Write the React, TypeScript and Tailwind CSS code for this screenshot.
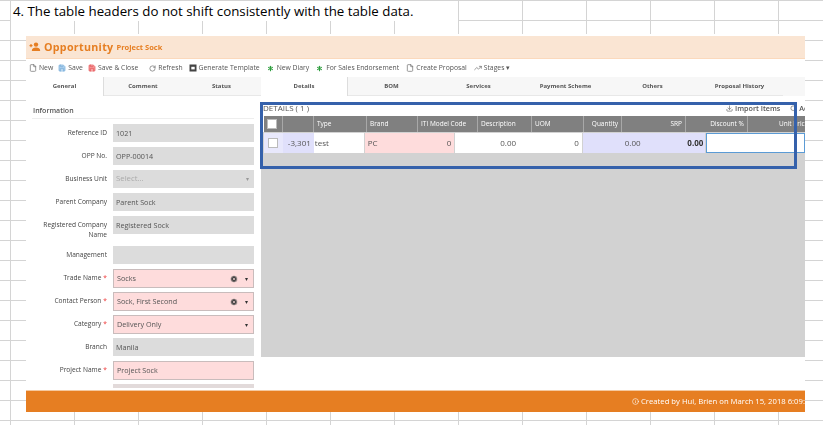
import { File, Save, RotateCw, Asterisk, TrendingUp, CircleX, Info, Search, Download } from "lucide-react";

const font = { fontFamily: '"Open Sans", "Noto Sans", sans-serif' };

type Field = { label: string; value?: string; tone: "gray" | "pink"; req?: boolean; clear?: boolean; caret?: boolean; placeholder?: boolean; h: string; mb: string };

const fields: Field[] = [
  { label: "Reference ID", value: "1021", tone: "gray", h: "h-[18px]", mb: "mb-[5px]" },
  { label: "OPP No.", value: "OPP-00014", tone: "gray", h: "h-[18px]", mb: "mb-[5px]" },
  { label: "Business Unit", value: "Select...", tone: "gray", caret: true, placeholder: true, h: "h-[18px]", mb: "mb-[5px]" },
  { label: "Parent Company", value: "Parent Sock", tone: "gray", h: "h-[18px]", mb: "mb-[5px]" },
  { label: "Registered Company Name", value: "Registered Sock", tone: "gray", h: "h-[18px]", mb: "mb-[6px]" },
  { label: "Management", value: "", tone: "gray", h: "h-[18px]", mb: "mb-[5px]" },
  { label: "Trade Name", value: "Socks", tone: "pink", req: true, clear: true, caret: true, h: "h-[19px]", mb: "mb-[4px]" },
  { label: "Contact Person", value: "Sock, First Second", tone: "pink", req: true, clear: true, caret: true, h: "h-[19px]", mb: "mb-[4px]" },
  { label: "Category", value: "Delivery Only", tone: "pink", req: true, caret: true, h: "h-[19px]", mb: "mb-[4px]" },
  { label: "Branch", value: "Manila", tone: "gray", h: "h-[18px]", mb: "mb-[5px]" },
  { label: "Project Name", value: "Project Sock", tone: "pink", req: true, h: "h-[19px]", mb: "mb-[4px]" },
];

const tabs = [
  { t: "General", w: "w-[78px]", on: true },
  { t: "Comment", w: "w-[78px]" },
  { t: "Status", w: "w-[79px]" },
  { t: "Details", w: "w-[87px]", on: true },
  { t: "BOM", w: "w-[87px]" },
  { t: "Services", w: "w-[87px]" },
  { t: "Payment Scheme", w: "w-[87px]" },
  { t: "Others", w: "w-[87px]" },
  { t: "Proposal History", w: "w-[87px]" },
];

const heads = [
  { t: "", w: "w-[19px]", box: true },
  { t: "", w: "w-[31px]" },
  { t: "Type", w: "w-[53px]" },
  { t: "Brand", w: "w-[51px]" },
  { t: "ITI Model Code", w: "w-[60px]" },
  { t: "Description", w: "w-[54px]" },
  { t: "UOM", w: "w-[52px]" },
  { t: "Quantity", w: "w-[38px]", right: true },
  { t: "SRP", w: "w-[64px]", right: true },
  { t: "Discount %", w: "w-[62px]", right: true },
];

function Tool({ icon, label, cls }: { icon: React.ReactNode; label: string; cls?: string }) {
  return (
    <span className={`flex items-center gap-[2px] ${cls ?? ""}`}>
      {icon}
      <span>{label}</span>
    </span>
  );
}

function FormRow({ f }: { f: Field }) {
  const bg = f.tone === "pink" ? "bg-[#fedcdc] border border-[#c9bcbc]" : "bg-[#dcdcdc]";
  return (
    <div className={`flex ${f.mb}`}>
      <div className="w-[75px] shrink-0 text-right text-[6.6px] leading-[10px] text-[#444] pt-[4px]">
        {f.label}
        {f.req && <span className="text-[#e33] ml-[2px]">*</span>}
      </div>
      <div className={`ml-[6px] w-[141px] ${f.h} ${bg} flex items-center pl-[3px] pr-[5px] ${f.placeholder ? "text-[#aaa] text-[7.800px]" : "text-[#555] text-[7.200px]"}`}>
        <span className="flex-1">{f.value}</span>
        {f.clear && <CircleX size={8} className="text-[#fedcdc] fill-[#444] mr-[7px]" />}
        {f.caret && <span className={`text-[6px] leading-none ${f.placeholder ? "text-[#999]" : "text-[#333]"}`}>▾</span>}
      </div>
    </div>
  );
}

export default function App() {
  return (
    <div
      style={font}
      className="relative w-[823px] h-[425px] overflow-hidden bg-white bg-[linear-gradient(to_right,#d4d4d4_1px,transparent_1px),linear-gradient(to_bottom,#d4d4d4_1px,transparent_1px)] bg-[size:64px_20px] bg-[position:10px_0px]"
    >
      {/* sheet row 1 text */}
      <div className="ml-[11px] w-[447px] h-[20px] mt-px bg-white pl-[2px] text-[13.3px] leading-[20px] text-black whitespace-nowrap">
        4. The table headers do not shift consistently with the table data.
      </div>

      {/* application panel */}
      <div className="relative ml-[26px] mt-[13px] w-[779px] h-[378px] bg-white overflow-hidden blur-[0.4px]">
        {/* title */}
        <div className="mt-[2px] h-[23px] bg-[#fae5d3] border-b border-[#fbd9bc] flex items-center pl-[3px] text-[#e67e22]">
          <svg width="12" height="10" viewBox="0 0 12 10" className="mr-[3px]" fill="#e67e22">
            <circle cx="7" cy="2.6" r="2.2" />
            <path d="M2.8 9c0-2.400 1.900-3.400 4.200-3.400S11.200 6.600 11.200 9z" />
            <rect x="0.500" y="3" width="3" height="1.200" />
            <rect x="1.400" y="2" width="1.200" height="3.200" />
          </svg>
          <span className="text-[10.7px] font-bold tracking-[0.3px]">Opportunity</span>
          <span className="text-[7.500px] font-bold ml-[3px] mt-[2px]">Project Sock</span>
        </div>

        {/* toolbar */}
        <div className="h-[18px] flex items-center gap-[5px] pl-[3px] text-[6.800px] text-[#555] whitespace-nowrap">
          <Tool icon={<File size={8} className="text-[#666]" />} label="New" />
          <Tool icon={<Save size={8} className="text-[#6aa6d8] fill-[#b5d4ee]" />} label="Save" />
          <Tool icon={<Save size={8} className="text-[#e5484d] fill-[#f5a0a0]" />} label="Save & Close" />
          <Tool icon={<RotateCw size={7} className="text-[#555] ml-[6px]" />} label="Refresh" />
          <Tool
            icon={
              <svg width="8" height="8" viewBox="0 0 8 8" className="ml-px">
                <rect x="0.500" y="0.500" width="7" height="7" fill="#444" />
                <rect x="2.300" y="2.800" width="3.400" height="2.600" fill="#fff" />
              </svg>
            }
            label="Generate Template"
          />
          <Tool icon={<Asterisk size={9} strokeWidth={3} className="text-[#2e9e3f] ml-px" />} label="New Diary" />
          <Tool icon={<Asterisk size={9} strokeWidth={3} className="text-[#2e9e3f] ml-px" />} label="For Sales Endorsement" />
          <Tool icon={<File size={8} className="text-[#666] ml-[2px]" />} label="Create Proposal" />
          <Tool icon={<TrendingUp size={8} className="text-[#666] ml-[2px]" />} label="Stages ▾" />
        </div>

        {/* tabs */}
        <div className="h-[19px] flex bg-[#f7f7f7] text-[6px] font-bold text-[#555]">
          {tabs.map((t) => (
            <div
              key={t.t}
              className={`${t.w} shrink-0 flex items-center justify-center ${t.on ? "bg-white border-r border-[#ddd]" : "border-b border-[#e8e8e8]"}`}
            >
              {t.t}
            </div>
          ))}
        </div>

        <div className="flex">
          {/* left form */}
          <div className="w-[235px] shrink-0 h-[293px] overflow-hidden pl-[6px]">
            <div className="mt-[10px] h-[13px] w-[222px] border-b border-[#eee] text-[7px] font-semibold text-[#555] pl-px">
              Information
            </div>
            <div className="pt-[5px]">
              {fields.map((f) => (
                <FormRow key={f.label} f={f} />
              ))}
              <div className="ml-[81px] w-[141px] h-[4px] bg-[#e2dada]" />
            </div>
          </div>

          {/* details */}
          <div className="w-[544px] shrink-0">
            <div className="h-[11px] mt-[9px] bg-white flex items-start pl-[2px] text-[8px] leading-[5px] text-[#555] overflow-hidden whitespace-nowrap">
              <span>DETAILS ( 1 )</span>
              <span className="flex items-center gap-[10px] font-semibold text-[7.200px] ml-auto shrink-0 mr-[-8px]">
                <span className="flex items-center gap-[2px]"><Download size={7} />Import Items</span>
                <span className="flex items-center gap-[2px]"><Search size={7} />Add</span>
              </span>
            </div>
            <div className="h-[241px] bg-[#d2d2d2] overflow-hidden">
              <div className="flex h-[16px] pl-[3px] bg-[#fff]">
                <div className="flex w-full bg-[#808080] text-[6.500px] text-white">
                  {heads.map((h, i) => (
                    <div
                      key={i}
                      className={`${h.w} shrink-0 flex items-center border-r border-[#a8a8a8] whitespace-nowrap overflow-hidden ${h.right ? "justify-end pr-[3px]" : "pl-[3px]"}`}
                    >
                      {h.box && <span className="w-[10px] h-[10px] bg-white border border-[#bbb]" />}
                      {h.t}
                    </div>
                  ))}
                  <div className="flex-1 flex items-center pl-[31px] whitespace-nowrap overflow-hidden">Unit Price</div>
                </div>
              </div>
              <div className="flex h-[20px] mt-px pl-[3px] text-[8px] text-[#555]">
                <div className="w-[19px] bg-[#e8e8fc] flex items-center justify-center">
                  <span className="w-[10px] h-[10px] bg-white border border-[#bbb]" />
                </div>
                <div className="w-[31px] bg-[#e0e0fb] flex items-center justify-end pr-[3px]">-3,301</div>
                <div className="w-[50px] bg-white flex items-center pl-px">test</div>
                <div className="w-[54px] ml-px bg-[#fedcdc] flex items-center pl-[3px]">PC</div>
                <div className="w-[36px] bg-[#fedcdc] flex items-center justify-end pr-[3px]">0</div>
                <div className="w-[64px] ml-px bg-white flex items-center justify-end pr-[3px]">0.00</div>
                <div className="w-[63px] bg-white flex items-center justify-end pr-[3px]">0</div>
                <div className="w-[62px] ml-px bg-[#e0e0fb] flex items-center justify-end pr-[4px]">0.00</div>
                <div className="w-[61px] bg-[#e0e0fb] flex items-center justify-end pr-[2px] font-bold text-[#333]">0.00</div>
                <div className="w-[99px] ml-px bg-white border border-[#5b9bd5]" />
              </div>
            </div>
          </div>
        </div>

        {/* footer */}
        <div className="mt-px h-[22px] bg-[#e67e22] border-t border-[#f5c9a0] flex items-center justify-end text-[7.700px] text-white whitespace-nowrap overflow-hidden">
          <Info size={7} className="mr-[2px] shrink-0" />
          <span className="w-[164px] overflow-hidden">Created by Hui, Brien on March 15, 2018 6:09:</span>
        </div>
      </div>

      {/* annotation rectangle */}
      <div className="absolute left-[260px] top-[102px] w-[537px] h-[67px] border-[3px] border-[#3561ab]" />
    </div>
  );
}
